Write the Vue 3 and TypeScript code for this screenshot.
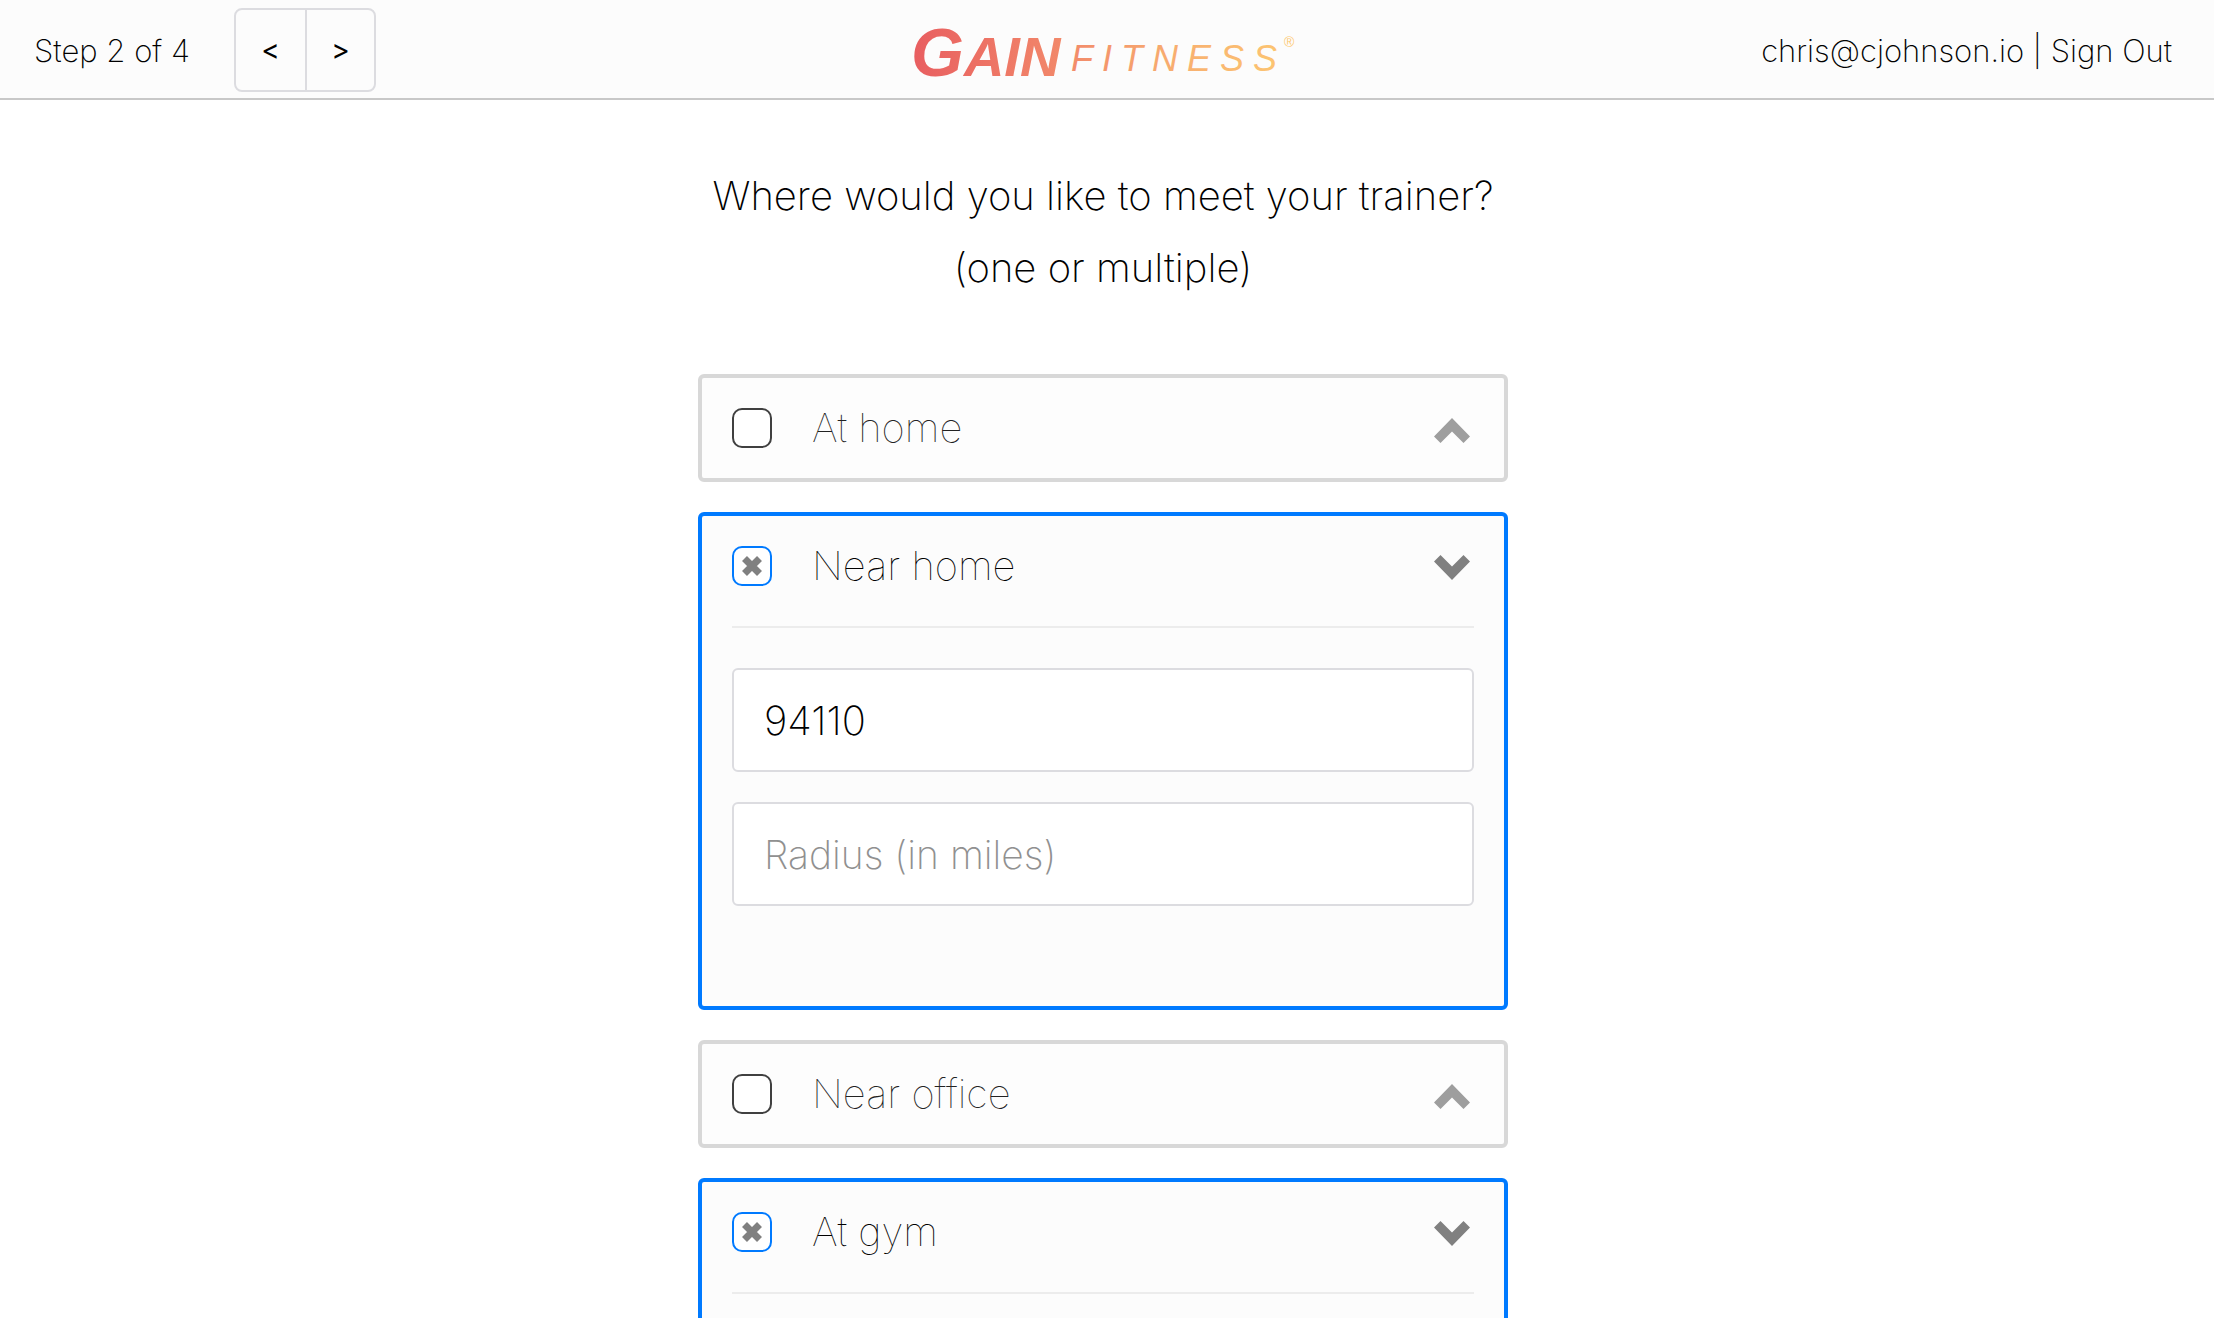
<script setup lang="ts">
import { reactive, ref } from 'vue'

interface Place {
  id: string
  label: string
  selected: boolean
  zip: string
  radius: string
}

const step = ref(2)
const totalSteps = 4
const email = 'chris@cjohnson.io'

const places = reactive<Place[]>([
  { id: 'at-home', label: 'At home', selected: false, zip: '', radius: '' },
  { id: 'near-home', label: 'Near home', selected: true, zip: '94110', radius: '' },
  { id: 'near-office', label: 'Near office', selected: false, zip: '', radius: '' },
  { id: 'at-gym', label: 'At gym', selected: true, zip: '', radius: '' },
])

function go(delta: number): void {
  step.value = Math.min(totalSteps, Math.max(1, step.value + delta))
}
</script>

<template>
  <div class="page">
    <header class="topbar">
      <div class="progress">
        <span>Step {{ step }} of {{ totalSteps }}</span>
        <div class="pager">
          <button type="button" aria-label="Previous step" @click="go(-1)">&lt;</button>
          <button type="button" aria-label="Next step" @click="go(1)">&gt;</button>
        </div>
      </div>

      <svg class="logo" viewBox="0 0 388 88" role="img" aria-label="Gain Fitness">
        <defs>
          <linearGradient id="brand" gradientUnits="userSpaceOnUse" x1="0" y1="0" x2="388" y2="0">
            <stop offset="0" stop-color="#e85d60" />
            <stop offset="0.4" stop-color="#f2896a" />
            <stop offset="0.7" stop-color="#f8b070" />
            <stop offset="1" stop-color="#fdc872" />
          </linearGradient>
        </defs>
        <g fill="url(#brand)">
          <text x="2" y="70" class="mark"><tspan class="cap">G</tspan>AIN</text>
          <text x="162" y="65" class="sub">FITNESS</text>
          <text x="375" y="41" class="reg">®</text>
        </g>
      </svg>

      <div class="account">
        <span>{{ email }} | <a href="#sign-out">Sign Out</a></span>
      </div>
    </header>

    <main class="content">
      <h1 class="question">
        Where would you like to meet your trainer?<br />(one or multiple)
      </h1>

      <div class="places">
        <section v-for="place in places" :key="place.id" class="card" :class="{ open: place.selected }">
          <div class="card-head">
            <span class="tick">
              <input :id="place.id" v-model="place.selected" type="checkbox" />
              <svg v-if="place.selected" viewBox="0 0 20 20" aria-hidden="true">
                <path d="M2.5 2.5 17.5 17.5M17.5 2.5 2.5 17.5" stroke="#808080" stroke-width="7" />
              </svg>
            </span>
            <label :for="place.id">{{ place.label }}</label>
            <button
              type="button"
              class="toggle"
              :aria-label="`Toggle ${place.label}`"
              :aria-expanded="place.selected"
              @click="place.selected = !place.selected"
            >
              <svg viewBox="0 0 40 40" aria-hidden="true">
                <path v-if="place.selected" fill="#808080" d="M0 15.5 6.5 9 18 20.5 29.5 9 36 15.5 18 34Z" />
                <path v-else fill="#9e9e9e" d="M0 28.5 18 10 36 28.5 29.5 35 18 23.5 6.5 35Z" />
              </svg>
            </button>
          </div>

          <div v-if="place.selected" class="fields">
            <input v-model="place.zip" type="text" placeholder="Zip code" aria-label="Zip code" />
            <input v-model="place.radius" type="text" placeholder="Radius (in miles)" aria-label="Radius in miles" />
          </div>
        </section>
      </div>
    </main>
  </div>
</template>

<style>
body {
  margin: 0;
  background: #fff;
}
</style>

<style scoped>
.page {
  display: flex;
  flex-direction: column;
  height: 100vh;
  color: #000;
  font-family: Inter, 'Liberation Sans', sans-serif;
  font-weight: 200;
}

.topbar {
  display: grid;
  grid-template-columns: 1fr auto 1fr;
  align-items: center;
  flex: none;
  box-sizing: border-box;
  height: 100px;
  padding: 2px 42px 0 34px;
  border-bottom: 2px solid #c8c8c8;
  background: #fcfcfc;
  font-size: 31px;
}

.progress {
  display: flex;
  align-items: center;
  gap: 44px;
}

.pager {
  display: flex;
  border: 2px solid #dcdce0;
  border-radius: 8px;
}

.pager button {
  box-sizing: border-box;
  width: 69px;
  height: 80px;
  padding: 0;
  border: 0;
  background: none;
  color: #000;
  font: inherit;
  font-size: 28px;
  font-weight: 400;
}

.pager button + button {
  border-left: 2px solid #dcdce0;
}

.logo {
  width: 388px;
  height: 88px;
}

.mark {
  font: italic bold 56px 'Liberation Sans', sans-serif;
}

.cap {
  font-size: 68px;
}

.sub {
  font: italic 36px 'Liberation Sans', sans-serif;
  letter-spacing: 9px;
}

.reg {
  font: 14px 'Liberation Sans', sans-serif;
}

.account {
  text-align: right;
}

.account a {
  color: inherit;
  text-decoration: none;
}

.content {
  flex: 1;
  min-height: 0;
  overflow-y: auto;
  scrollbar-width: none;
  padding: 60px 8px 30px 0;
}

.question {
  margin: 0 0 70px;
  font-size: 40px;
  font-weight: inherit;
  line-height: 72px;
  text-align: center;
}

.places {
  display: flex;
  flex-direction: column;
  gap: 30px;
  max-width: 810px;
  margin: 0 auto;
}

.card {
  padding: 30px;
  border: 4px solid #d8d8d8;
  border-radius: 6px;
  background: #fdfdfd;
}

.card.open {
  padding-bottom: 100px;
  border-color: #007aff;
  background: #fcfcfc;
}

.card-head {
  display: flex;
  align-items: center;
  gap: 40px;
  height: 40px;
}

.card-head label {
  flex: 1;
  color: #222;
  font-size: 40px;
  font-weight: 100;
  line-height: 40px;
}

.open label {
  color: #000;
}

.tick {
  display: grid;
  place-items: center;
}

.tick > * {
  grid-area: 1 / 1;
}

.tick input {
  appearance: none;
  box-sizing: border-box;
  width: 40px;
  height: 40px;
  margin: 0;
  border: 2px solid #404040;
  border-radius: 10px;
  background: #fff;
}

.open .tick input {
  border-color: #007aff;
}

.tick svg {
  width: 20px;
  height: 20px;
  pointer-events: none;
}

.toggle {
  width: 40px;
  height: 40px;
  padding: 0;
  border: 0;
  background: none;
}

.toggle svg {
  display: block;
  width: 40px;
  height: 40px;
}

.fields {
  display: flex;
  flex-direction: column;
  gap: 30px;
  margin-top: 40px;
  padding-top: 40px;
  border-top: 2px solid #ececec;
}

.fields input {
  box-sizing: border-box;
  width: 100%;
  height: 104px;
  padding: 0 30px;
  border: 2px solid #dcdce0;
  border-radius: 6px;
  background: #fff;
  color: #000;
  font: inherit;
  font-size: 40px;
}

.fields input::placeholder {
  color: #909090;
  font-size: 39px;
  opacity: 1;
}
</style>
